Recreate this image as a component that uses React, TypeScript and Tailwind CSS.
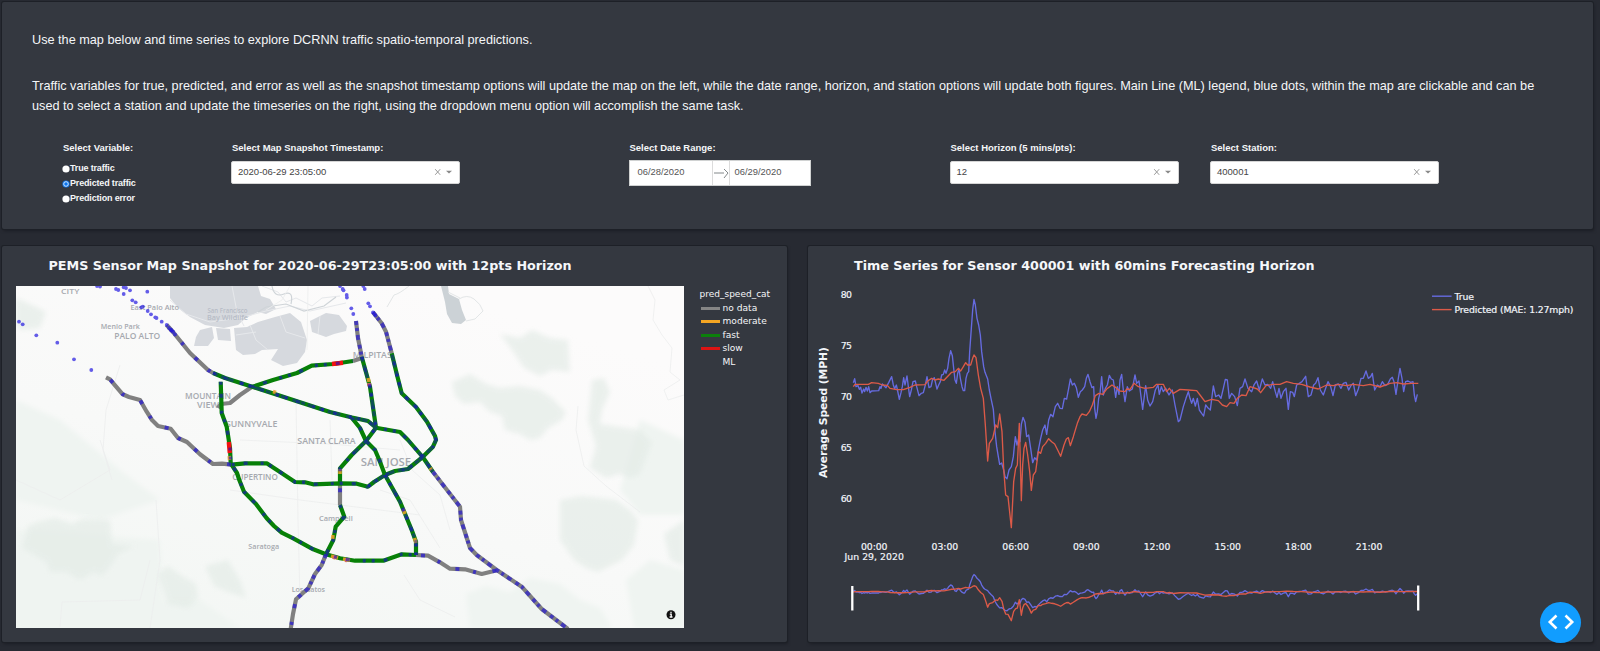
import React from "react";

const TRUE_SPEED =
  "160,443 164,431 168,455 174,452 178,463 182,457 186,474 191,462 194,470 198,457 202,468 206,455 210,473 215,468 236,467 240,455 243,460 247,447 252,452 258,458 266,443 275,425 280,450 284,461 289,450 293,468 298,493 303,473 307,455 311,428 315,450 321,423 325,455 329,485 334,465 339,440 346,438 350,455 357,482 364,475 370,473 376,450 381,425 387,458 393,455 398,432 403,428 407,445 411,462 416,450 421,440 425,420 430,418 434,405 438,415 443,400 447,370 452,347 457,362 461,400 465,435 469,445 473,415 477,402 481,430 486,455 490,467 494,467 498,430 502,415 506,410 509,350 514,280 518,225 522,193 526,210 531,250 536,270 541,300 545,350 551,395 555,412 563,432 568,465 573,490 580,523 585,590 590,635 595,665 599,688 605,684 611,705 615,725 621,731 627,705 634,695 640,665 646,605 651,630 656,610 660,620 664,568 669,547 675,562 680,605 686,600 692,640 698,683 704,668 710,675 716,640 722,610 728,585 735,570 740,598 746,555 752,538 759,545 766,515 773,505 780,520 787,521 793,490 800,492 806,460 811,432 817,450 823,445 829,458 835,487 841,470 847,465 854,455 859,430 864,418 870,440 876,458 881,455 884,520 888,550 892,530 896,490 900,475 905,425 910,480 916,460 922,450 928,421 934,432 940,435 947,487 952,455 957,478 960,435 965,418 970,465 975,500 982,455 988,468 997,462 1005,420 1010,445 1017,438 1028,523 1037,452 1043,495 1050,513 1058,500 1066,465 1074,450 1078,478 1084,455 1090,470 1097,460 1107,480 1117,465 1125,510 1135,560 1140,555 1150,515 1158,490 1165,470 1170,490 1175,505 1180,490 1186,513 1192,490 1198,525 1205,535 1211,543 1217,510 1225,520 1231,525 1240,453 1247,485 1256,480 1263,490 1270,460 1276,433 1282,435 1288,490 1295,475 1304,485 1312,512 1320,460 1328,455 1335,432 1344,460 1355,470 1362,450 1370,438 1378,465 1387,432 1395,450 1403,448 1412,460 1418,440 1426,470 1431,487 1437,460 1443,490 1450,470 1458,460 1465,523 1471,470 1478,472 1483,485 1490,450 1498,445 1506,440 1517,424 1525,485 1533,480 1541,450 1547,445 1554,428 1561,465 1570,480 1577,460 1584,440 1592,455 1599,482 1606,450 1615,447 1623,460 1630,445 1638,442 1646,465 1654,450 1660,445 1667,482 1675,462 1683,430 1690,430 1698,408 1705,430 1712,425 1717,415 1724,465 1732,450 1740,455 1747,440 1755,452 1763,448 1771,432 1777,427 1782,440 1788,478 1795,430 1800,400 1806,430 1811,470 1817,440 1824,438 1832,442 1839,440 1843,480 1847,500 1852,478";

const PREDICTED_SPEED =
  "160,455 165,448 205,448 215,443 235,445 247,450 262,451 270,460 290,464 310,464 330,457 345,450 375,449 383,438 395,430 405,435 415,432 432,436 447,420 455,412 466,410 475,400 482,408 490,395 497,383 503,390 512,390 518,370 522,360 528,368 535,420 542,460 550,490 556,570 563,678 568,625 578,610 587,570 593,578 599,537 606,590 611,700 617,780 624,785 634,878 641,740 647,700 652,690 658,565 664,797 668,690 672,640 677,622 683,660 689,710 694,766 700,720 707,710 715,650 722,655 728,635 737,625 746,611 755,620 764,627 773,645 782,664 792,630 799,612 805,608 811,632 820,605 832,565 840,545 846,537 859,541 868,530 877,510 886,482 897,475 908,478 920,462 936,450 948,458 960,468 975,470 980,462 990,463 1002,445 1015,455 1035,460 1060,457 1070,448 1090,448 1100,470 1108,460 1120,475 1140,463 1165,465 1190,467 1200,480 1215,500 1235,493 1255,497 1267,510 1280,515 1290,503 1302,505 1312,490 1325,480 1338,482 1350,455 1360,458 1372,462 1382,473 1398,452 1420,448 1440,448 1460,440 1480,445 1505,448 1530,456 1555,462 1580,450 1600,452 1615,448 1640,452 1660,448 1690,452 1710,448 1740,456 1770,445 1790,443 1810,447 1835,445 1855,445";

const NO_DATA = [
  "166.7,325 173,332 190,353 208,370 213,373",
  "433,472 460,506.7 461,520 470,548 476.7,555 496.7,570 521.7,586.7 541.7,609 568,629",
  "416,555 428,555.7 440,562.3 450,568.7 465,569.3 481.7,574 498,570",
  "106,377.3 110,379.3 122.7,394.3 129,397 140,400 146.7,411.7 152,420 158,426 170.7,428.7 178,438 187,442 200,454.3 213,464 222,463.7 231.7,464.7",
  "391.7,353.3 386,331.7 381.7,323.3 373,312.3",
  "356,321 358,338 361.7,356.7",
  "340,483.3 340,505",
  "326,554.3 321.7,565 315,574 308.3,588.3 296,599.3 293,614 290.7,629",
];

const NO_DATA_PLAIN = ["218,408 221,404 230,403 240,395 251.7,387", "353,361 362,358"];

const FAST = [
  "213,373 225,378 253,387 287,398 330,412 352,417.5 368,421 376,427.7 400,432 408,440 422.7,457 433,472",
  "251.7,387 273,380 297,373 311.7,365.7 333,364 353,361",
  "220.7,381.7 221.7,413 226.7,426.7 230,448 230.7,463.3 237,473 239.3,480 244,491.7 256,504 266.7,518.3 274,526 281.7,532.7 293.3,538.3 313.3,549.3 326,554.3 340,558.3 355,560.7 383.3,560.7 401.7,554.3 416,555",
  "231.7,464.7 245,463.3 266.7,463.3 280,472 295,482 305,482.3 313,484.3 340,483.3 356.7,483.7 368,486.7 374,482 385,475 395,471 408,469 422.7,457 433,446.7 436,440 435,436 427,421.7 416,407 401.7,393.3 397,375 391.7,353.3",
  "361.7,356.7 370,386.7 376,427.7 366,441 351.7,455 340,468.3 340,483.3",
  "340,505 344.3,516.7 335.7,526.7 333.3,540 326,554.3",
  "351.7,417.7 360,428 366,441 375,450 379.3,460 385,475 400,501.7 411.7,530 416,541.7 416,555",
];

const DENSE = [
  "213,373 225,378 253,387 287,398 330,412 352,417.5 368,421 376,427.7",
  "408,440 422.7,457 433,472",
  "366,488 374,482 385,475 395,471 408,469 422.7,457 433,446.7 436,440 435,436 427,421.7",
  "385,475 400,501.7 411.7,530 416,541.7 416,555",
  "361.7,356.7 370,386.7 376,427.7 366,441 351.7,455",
  "427,421.7 416,407 401.7,393.3 397,375 391.7,353.3",
];

const DENSE_GRAY = [
  "356,321 358,338 361.7,356.7",
  "373,312.3 381.7,323.3 386,331.7 391.7,353.3",
  "433,472 460,506.7 461,520 470,548 476.7,555 496.7,570 521.7,586.7 541.7,609 568,629",
  "326,554.3 321.7,565 315,574 308.3,588.3 296,599.3",
];

const SPARSE_GRAY = [
  "106,377.3 110,379.3 122.7,394.3 129,397 140,400 146.7,411.7 152,420 158,426 170.7,428.7 178,438 187,442 200,454.3 213,464 222,463.7 231.7,464.7",
  "166.7,325 173,332 190,353 208,370 213,373",
  "416,555 428,555.7 440,562.3 450,568.7 465,569.3 481.7,574 498,570",
  "296,599.3 293,614 290.7,629",
  "340,483.3 340,505",
];

const MODERATE = ["229.2,456 229.6,460", "340,469 340,474", "333,535 332.6,539", "331,556 338,558", "343,559 350,560.3", "368.2,378 369,382", "414.5,538 416,543", "403,509 405,514", "430,468 431.5,470", "273,391.5 276,392.5"];

const DOTS: [number, number][] = [
  [97, 286], [100, 286.5], [116, 289], [118.3, 290], [123.7, 294], [123.7, 287.3], [126, 288], [130, 290.3], [147.3, 291.7],
  [132.3, 300.3], [135.7, 302.3], [141.3, 307.3], [142.8, 306.6], [147.7, 311], [151, 314.3], [155.3, 317.3], [156.5, 318], [161.7, 321.7],
  [166.7, 325], [169, 328], [171, 330], [173.3, 332], [175, 334.5],
  [19, 321.7], [22.7, 324.3], [36.3, 335.3], [57.3, 342.7], [74, 359.3], [91.3, 370],
  [340, 286], [342.7, 289], [343.5, 290.3], [346.7, 295], [346.9, 297.5], [351.3, 308.3], [353.3, 314],
  [363.3, 286], [364.7, 289], [368.3, 303.3], [370, 306.3], [373, 312.3], [375.5, 315.5],
];

type Place = [string, number, number, number, number];
const PLACES: Place[] = [
  ["CITY", 61, 294.4, 18.3, 7.8],
  ["East Palo Alto", 130.5, 309.7, 48.5, 7.4],
  ["Menlo Park", 100.8, 329.4, 39, 7.4],
  ["PALO ALTO", 114.3, 339, 46, 8],
  ["MOUNTAIN", 185, 398.7, 46, 8.2],
  ["VIEW", 197, 407.5, 22, 8.2],
  ["SUNNYVALE", 226, 426.8, 51.3, 8.2],
  ["SANTA CLARA", 297.3, 444, 58.4, 8.2],
  ["MILPITAS", 352.7, 358, 39, 8],
  ["SAN JOSE", 360.7, 465.8, 50.5, 10.4],
  ["CUPERTINO", 232.3, 480, 45.5, 8],
  ["Campbell", 319, 521.4, 33.7, 7.4],
  ["Saratoga", 248.3, 548.6, 30.8, 7.4],
  ["Los Gatos", 291.7, 591.6, 33.3, 7.4],
];

const WATER = [
  "170,286 258,286 261,296 270,299 276,309 266,314 258,312 246,318 238,325 224,328 205,325 190,317 178,308 170,298",
  "200,330 212,327 214,338 208,346 194,346 196,337",
  "216,328 230,329 231,341 218,340",
  "234,328 247,327 258,322 275,317 290,313 301,322 307,340 305,352 297,363 283,366 271,360 278,349 262,350 255,354 243,355 236,350",
  "310,321 326,313 339,315 347,326 346,331 334,334 326,337 312,332",
];

const SHADES = [
  "16,298 34,306 46,312 40,328 22,330 16,326",
  "28,526 38,522 55,518 72,524 82,519 110,520 112,544 134,546 118,554 112,564 102,576 94,572 80,580 66,572 50,572 46,562 36,556 22,548",
  "158,574 168,566 182,576 196,584 198,598 188,608 168,604",
  "205,566 228,560 240,580 246,598 228,592 214,586",
  "452,382 470,374 486,384 500,388 520,386 540,390 552,398 566,412 562,420 548,428 540,438 530,440 520,434 505,430 502,416 490,412 480,402 464,404 455,396",
  "500,334 520,338 532,330 550,338 568,340 570,372 552,370 540,376 524,368 512,350",
  "592,380 604,378 610,392 602,410 600,424 640,430 652,442 640,474 630,478 620,474 606,478 590,468 596,446 588,420",
  "560,500 582,496 600,498 616,500 630,510 638,520 634,545 622,560 598,572 586,568 574,560 560,540",
  "664,534 684,520 684,566 670,560",
];

const TINTS = [
  "16,530 160,540 162,600 200,600 240,628 16,628",
  "466,594 486,586 510,592 530,578 560,584 580,600 600,608 612,628 470,628",
  "626,580 650,560 684,570 684,628 634,628",
  "640,420 684,440 684,515 640,515 620,490",
  "16,400 60,420 120,470 160,500 100,520 16,500",
];

const HAIRLINES = [
  "120,365 106,410 103,450 112,480",
  "290,286 282,300 266,310", "307,350 308,286",
  "648,286 655,300 653,320 662,335 672,348 670,372 680,380 664,390 668,400 684,395",
  "400,440 412,470 440,495 450,530", "578,406 576,430 584,466 606,486 640,512",
  "60,627 62,602 140,600 150,560", "150,628 160,560 156,500", "16,480 60,500 110,470 100,440",
  "230,490 300,500 420,515", "296,400 298,520 300,600", "330,420 332,480",
  "240,440 330,444 400,450", "404,575 420,600 455,617", "380,490 410,500 440,548",
];

const BAY_EDGES = [
  "232,286 237,312 244,326", "170,300 186,314 210,322 240,318 266,311 290,306 310,311 346,303",
  "262,286 278,292 286,302 296,298 312,306 322,298 340,296", "250,325 256,340 268,350", "280,316 286,332 305,338", "320,316 318,334", "236,335 256,332",
];

function PlotText({ x, y, w, children, anchor = "start" }: { x: number; y: number; w: number; children: string; anchor?: "start" | "middle" }) {
  return (
    <text x={x} y={y} textLength={w} textAnchor={anchor} fontSize="9.3" fill="#f2f5fa" stroke="#f2f5fa" strokeWidth="0.2">
      {children}
    </text>
  );
}

function Lines({ data, color, width, dash, opacity = 1 }: { data: string[]; color: string; width: number; dash?: string; opacity?: number }) {
  return (
    <g fill="none" stroke={color} strokeWidth={width} strokeDasharray={dash} opacity={opacity} strokeLinejoin="round">
      {data.map((points, i) => (
        <polyline key={i} points={points} />
      ))}
    </g>
  );
}

function SensorMap() {
  return (
    <svg width="668" height="342" viewBox="16 286 668 342" className="block shrink-0 bg-[#fafbfa]">
      <defs>
        <linearGradient id="terrain" x1="0" y1="1" x2="0.6" y2="0">
          <stop offset="0" stopColor="#f2f6f3" />
          <stop offset="0.5" stopColor="#f8f9f8" />
          <stop offset="1" stopColor="#fcfbfb" />
        </linearGradient>
        <filter id="haze" x="-10%" y="-10%" width="120%" height="120%">
          <feGaussianBlur stdDeviation="2.5" />
        </filter>
      </defs>
      <rect x="16" y="286" width="668" height="342" fill="url(#terrain)" />
      <g fill="#eff4f1" filter="url(#haze)">
        {TINTS.map((p) => <polygon key={p} points={p} />)}
      </g>
      <g fill="#e4ece7" opacity="0.7" filter="url(#haze)">
        {SHADES.map((p) => <polygon key={p} points={p} />)}
      </g>
      <g fill="#d6d9de">
        {WATER.map((p) => <polygon key={p} points={p} />)}
      </g>
      <polygon points="441,286 448,286 449,294 459,299 462,310 466,320 461,324 452,323 447,314 445,302" fill="#ccd2d6" />
      <path d="M459 299q8-5 15 0t9 12l-8 8-9 2M448 292l12 6M409 286q-10 8-15 9l-7 12" fill="none" stroke="#e3e6e7" />
      <Lines data={BAY_EDGES} color="#e6e8eb" width={1} />
      <path d="M258 312l8-5 20-3 18 7 20-5 12-9M272 286q2 12 12 8t7 10" fill="none" stroke="#cfd4d8" strokeWidth="1.2" />
      <Lines data={HAIRLINES} color="#eceeed" width={0.8} />
      <g fontFamily="'Open Sans', 'Noto Sans', sans-serif" fontWeight="600" fill="#a6a9af">
        {PLACES.map(([name, x, y, w, size]) => (
          <text key={name} x={x} y={y} textLength={w} lengthAdjust="spacingAndGlyphs" fontSize={size}>{name}</text>
        ))}
        <g fill="#b6bcc6" fontSize="6.400">
          <text x="207.5" y="312.8" textLength="40" lengthAdjust="spacingAndGlyphs">San Francisco</text>
          <text x="207" y="319.8" textLength="41" lengthAdjust="spacingAndGlyphs">Bay Wildlife</text>
        </g>
      </g>
      <Lines data={NO_DATA} color="#808080" width={4.2} />
      <Lines data={NO_DATA_PLAIN} color="#808080" width={4.2} />
      <Lines data={FAST} color="#078007" width={4.2} />
      <Lines data={MODERATE} color="#f0a12a" width={3.6} opacity={0.85} />
      <Lines data={["332,364 343,362.8", "228.8,442 229.8,453"]} color="#f31010" width={4.4} />
      <Lines data={["345,560 347,560.3", "333,557 335.5,557.6", "369,383 369.4,386"]} color="#dc6a60" width={4} />
      <g strokeLinecap="butt">
        <Lines data={FAST} color="#1c12c4" width={3.4} dash="3 9 4 13 3 6" opacity={0.6} />
        <Lines data={DENSE} color="#1c12c4" width={3.2} dash="5 4 4 3 6 6" opacity={0.42} />
        <Lines data={DENSE_GRAY} color="#2a1cd0" width={3.8} dash="4 3 3 4 5 5" opacity={0.7} />
        <Lines data={SPARSE_GRAY} color="#2a1cd0" width={3.8} dash="0 5 4 14 3 12" opacity={0.75} />
      </g>
      <g fill="#1d12e0" opacity="0.68">
        {DOTS.map(([x, y], i) => <circle key={i} cx={x} cy={y} r="1.900" />)}
      </g>
      <circle cx="671" cy="614.7" r="4.5" fill="#111" />
      <path d="M671 611.7v1.3M669.8 614.1h1.4v2.8M669.6 617h2.9" fill="none" stroke="#fff" strokeWidth="1.3" />
    </svg>
  );
}

const LEGEND = [
  { label: "no data", color: "bg-[#858585]" },
  { label: "moderate", color: "bg-[#f5a623]" },
  { label: "fast", color: "bg-[#0b800b]" },
  { label: "slow", color: "bg-[#dd1414]" },
  { label: "ML", color: "bg-transparent" },
];

const HOURS = ["00:00", "03:00", "06:00", "09:00", "12:00", "15:00", "18:00", "21:00"];

function TimeSeries() {
  const series = (
    <>
      <polyline points={TRUE_SPEED} stroke="#666be0" vectorEffect="non-scaling-stroke" />
      <polyline points={PREDICTED_SPEED} stroke="#dc5a48" vectorEffect="non-scaling-stroke" />
    </>
  );
  return (
    <svg width="784" height="362" viewBox="808 280 784 362" className="block" fontFamily="'DejaVu Sans', Verdana, sans-serif">
      {[80, 75, 70, 65, 60].map((v, i) => (
        <PlotText key={v} x={840.7} y={297.7 + i * 51} w={11.3}>{String(v)}</PlotText>
      ))}
      {HOURS.map((h, i) => (
        <PlotText key={h} x={874.2 + i * 70.7} y={549.6} w={26.6} anchor="middle">{h}</PlotText>
      ))}
      <PlotText x={844.5} y={560.4} w={59.3}>Jun 29, 2020</PlotText>
      <text transform="translate(827.3 412.6) rotate(-90)" textAnchor="middle" textLength="131" fontSize="10.8" fontWeight="700" fill="#f2f5fa">
        Average Speed (MPH)
      </text>
      <g fill="none" strokeWidth="1.35" strokeLinejoin="round">
        <g transform="translate(800 235) scale(0.33333)">{series}</g>
        <g transform="translate(800 561.5) scale(0.33333 0.0674)">{series}</g>
      </g>
      <path d="M852.3 586v24.6M1418.2 585.5v25" stroke="#fff" strokeWidth="2.3" />
      <path d="M1432 296.2h19.6" stroke="#666be0" strokeWidth="1.4" />
      <path d="M1432 309.6h19.6" stroke="#dc5a48" strokeWidth="1.4" />
      <PlotText x={1454.5} y={299.5} w={19.5}>True</PlotText>
      <PlotText x={1454.5} y={313} w={119}>Predicted (MAE: 1.27mph)</PlotText>
    </svg>
  );
}

function Dropdown({ label, value }: { label: string; value: string }) {
  return (
    <div className="w-[229px]">
      <div className="mb-[6px] pl-px text-[9.5px] font-bold leading-[14px]">{label}</div>
      <div className="flex h-[23px] items-center rounded-[2px] border border-[#d5d5d5] bg-white pr-[6px] pl-[6px] text-[#444]">
        <span className="flex-1 text-[9.5px]">{value}</span>
        <svg width="20" height="8" viewBox="0 0 20 8">
          <path d="M2.200 1.200l5 5.600M7.200 1.200l-5 5.600" stroke="#999" fill="none" />
          <path d="M13 2.700h6l-3 2.800z" fill="#888" />
        </svg>
      </div>
    </div>
  );
}

function Radio({ label, checked = false }: { label: string; checked?: boolean }) {
  return (
    <div className="flex h-[15.3px] items-center">
      <svg width="8" height="8" viewBox="0 0 8 8" className="shrink-0">
        <circle cx="4" cy="4" r="3.600" fill={checked ? "#0b75ee" : "#fff"} />
        {checked && <circle cx="4" cy="4" r="2.300" fill="none" stroke="#fff" strokeWidth="0.8" />}
      </svg>
      <span className="text-[9px] font-bold tracking-[-0.17px]">{label}</span>
    </div>
  );
}

const CARD = "rounded-[2px] bg-[#343840] shadow-[0_0_0_1px_#1d2027,1px_2px_3px_rgba(20,22,28,0.6)]";
const TITLE = "whitespace-nowrap font-['DejaVu_Sans',Verdana,sans-serif] text-[12.72px] leading-[16px] font-bold text-[#f5f7fa]";

export default function App() {
  return (
    <div className="relative h-[651px] w-[1600px] overflow-hidden bg-[#272a32] pt-[2px] pl-[2px] font-['Liberation_Sans',Arial,sans-serif] text-[#f4f6f8]">
      <section className={`${CARD} h-[227px] w-[1591px] px-[30px] pt-[28px]`}>
        <p className="text-[12.7px] leading-[20.5px]">Use the map below and time series to explore DCRNN traffic spatio-temporal predictions.</p>
        <p className="mt-[25px] w-[1530px] text-[12.7px] leading-[20.5px]">
          Traffic variables for true, predicted, and error as well as the snapshot timestamp options will update the map on the left, while the date range, horizon, and station options will update both figures. Main Line (ML) legend, blue dots, within the map are clickable and can be
          <br />
          used to select a station and update the timeseries on the right, using the dropdown menu option will accomplish the same task.
        </p>
        <div className="mt-[24px] flex items-start pl-[30px]">
          <div className="w-[169px]">
            <div className="mb-[6.500px] pl-[1px] text-[9.5px] font-bold leading-[14px]">Select Variable:</div>
            <Radio label="True traffic" />
            <Radio label="Predicted traffic" checked />
            <Radio label="Prediction error" />
          </div>
          <Dropdown label="Select Map Snapshot Timestamp:" value="2020-06-29 23:05:00" />
          <div className="ml-[168.500px] w-[182px]">
            <div className="mb-[5px] pl-px text-[9.5px] font-bold leading-[14px]">Select Date Range:</div>
            <div className="flex h-[26px] items-center border border-[#d0d2d2] bg-white text-[9.4px] text-[#555]">
              <span className="flex h-full w-[83px] items-center border-r border-[#dcdcdc] pl-[8px]">06/28/2020</span>
              <svg width="16" height="12" viewBox="0 0 16 12" className="shrink-0">
                <path d="M1 6h10M11 2l4 4-4 5" fill="none" stroke="#82888a" />
              </svg>
              <span className="flex h-full flex-1 items-center border-l border-[#dcdcdc] pl-[5px]">06/29/2020</span>
            </div>
          </div>
          <div className="ml-[139px]"><Dropdown label="Select Horizon (5 mins/pts):" value="12" /></div>
          <div className="ml-[31.500px]"><Dropdown label="Select Station:" value="400001" /></div>
        </div>
      </section>

      <div className="mt-[17px] flex gap-[21px]">
        <section className={`${CARD} h-[396px] w-[785px] pt-[12px] pl-[14px]`}>
          <h2 className={`${TITLE} pl-[32.500px]`}>PEMS Sensor Map Snapshot for 2020-06-29T23:05:00 with 12pts Horizon</h2>
          <div className="mt-[12px] flex">
            <SensorMap />
            <div className="pt-[2px] pl-[15.500px] font-['DejaVu_Sans',Verdana,sans-serif] text-[9.1px] leading-[13.5px]">
              <div className="text-[9px]">pred_speed_cat</div>
              {LEGEND.map(({ label, color }) => (
                <div key={label} className="flex items-center gap-[3px]">
                  <span className={`ml-px h-[3px] w-[19px] ${color}`} />
                  <span>{label}</span>
                </div>
              ))}
            </div>
          </div>
        </section>
        <section className={`${CARD} h-[396px] w-[785px] pt-[12px]`}>
          <h2 className={`${TITLE} pl-[46px]`}>Time Series for Sensor 400001 with 60mins Forecasting Horizon</h2>
          <div className="mt-[6px]">
            <TimeSeries />
          </div>
        </section>
      </div>

      <button aria-label="Toggle developer tools" className="absolute top-[601.500px] left-[1540px] flex size-[41px] items-center justify-center rounded-full bg-[#119dff]">
        <svg width="28" height="18" viewBox="0 0 28 18" fill="none" stroke="#fff" strokeWidth="2.600">
          <path d="M9.500 2.500L2.800 9l6.700 6.500M18.500 2.500L25.200 9l-6.700 6.500" />
        </svg>
      </button>
    </div>
  );
}
